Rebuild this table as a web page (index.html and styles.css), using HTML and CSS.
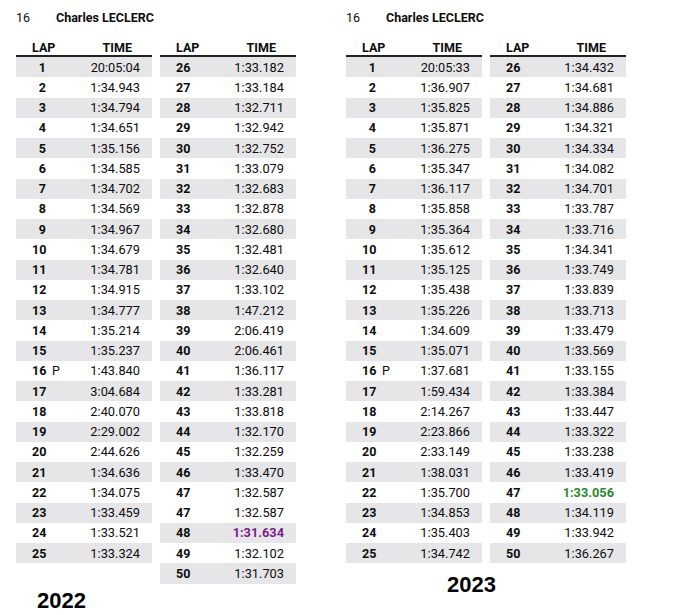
FILE: index.html
```html
<!DOCTYPE html>
<html>
<head>
<meta charset="utf-8">
<link rel="stylesheet" href="styles.css">
</head>
<body>
<div class="page">
  <section class="panel">
    <div class="driver"><span class="no">16</span><span class="name">Charles LECLERC</span></div>
    <div class="tables">
      <div class="table">
        <div class="thead"><span>LAP</span><span class="th-time">TIME</span></div>
        <div class="row g"><b>1</b><span class="t">20:05:04</span></div>
        <div class="row"><b>2</b><span class="t">1:34.943</span></div>
        <div class="row g"><b>3</b><span class="t">1:34.794</span></div>
        <div class="row"><b>4</b><span class="t">1:34.651</span></div>
        <div class="row g"><b>5</b><span class="t">1:35.156</span></div>
        <div class="row"><b>6</b><span class="t">1:34.585</span></div>
        <div class="row g"><b>7</b><span class="t">1:34.702</span></div>
        <div class="row"><b>8</b><span class="t">1:34.569</span></div>
        <div class="row g"><b>9</b><span class="t">1:34.967</span></div>
        <div class="row"><b>10</b><span class="t">1:34.679</span></div>
        <div class="row g"><b>11</b><span class="t">1:34.781</span></div>
        <div class="row"><b>12</b><span class="t">1:34.915</span></div>
        <div class="row g"><b>13</b><span class="t">1:34.777</span></div>
        <div class="row"><b>14</b><span class="t">1:35.214</span></div>
        <div class="row g"><b>15</b><span class="t">1:35.237</span></div>
        <div class="row"><b>16</b><i class="pit">P</i><span class="t">1:43.840</span></div>
        <div class="row g"><b>17</b><span class="t">3:04.684</span></div>
        <div class="row"><b>18</b><span class="t">2:40.070</span></div>
        <div class="row g"><b>19</b><span class="t">2:29.002</span></div>
        <div class="row"><b>20</b><span class="t">2:44.626</span></div>
        <div class="row g"><b>21</b><span class="t">1:34.636</span></div>
        <div class="row"><b>22</b><span class="t">1:34.075</span></div>
        <div class="row g"><b>23</b><span class="t">1:33.459</span></div>
        <div class="row"><b>24</b><span class="t">1:33.521</span></div>
        <div class="row g"><b>25</b><span class="t">1:33.324</span></div>
      </div>
      <div class="table">
        <div class="thead"><span>LAP</span><span class="th-time">TIME</span></div>
        <div class="row g"><b>26</b><span class="t">1:33.182</span></div>
        <div class="row"><b>27</b><span class="t">1:33.184</span></div>
        <div class="row g"><b>28</b><span class="t">1:32.711</span></div>
        <div class="row"><b>29</b><span class="t">1:32.942</span></div>
        <div class="row g"><b>30</b><span class="t">1:32.752</span></div>
        <div class="row"><b>31</b><span class="t">1:33.079</span></div>
        <div class="row g"><b>32</b><span class="t">1:32.683</span></div>
        <div class="row"><b>33</b><span class="t">1:32.878</span></div>
        <div class="row g"><b>34</b><span class="t">1:32.680</span></div>
        <div class="row"><b>35</b><span class="t">1:32.481</span></div>
        <div class="row g"><b>36</b><span class="t">1:32.640</span></div>
        <div class="row"><b>37</b><span class="t">1:33.102</span></div>
        <div class="row g"><b>38</b><span class="t">1:47.212</span></div>
        <div class="row"><b>39</b><span class="t">2:06.419</span></div>
        <div class="row g"><b>40</b><span class="t">2:06.461</span></div>
        <div class="row"><b>41</b><span class="t">1:36.117</span></div>
        <div class="row g"><b>42</b><span class="t">1:33.281</span></div>
        <div class="row"><b>43</b><span class="t">1:33.818</span></div>
        <div class="row g"><b>44</b><span class="t">1:32.170</span></div>
        <div class="row"><b>45</b><span class="t">1:32.259</span></div>
        <div class="row g"><b>46</b><span class="t">1:33.470</span></div>
        <div class="row"><b>47</b><span class="t">1:32.587</span></div>
        <div class="row"><b>47</b><span class="t">1:32.587</span></div>
        <div class="row g"><b>48</b><span class="t best-p">1:31.634</span></div>
        <div class="row"><b>49</b><span class="t">1:32.102</span></div>
        <div class="row g"><b>50</b><span class="t">1:31.703</span></div>
      </div>
    </div>
    <div class="year y2022">2022</div>
  </section>

  <section class="panel">
    <div class="driver"><span class="no">16</span><span class="name">Charles LECLERC</span></div>
    <div class="tables">
      <div class="table">
        <div class="thead"><span>LAP</span><span class="th-time">TIME</span></div>
        <div class="row g"><b>1</b><span class="t">20:05:33</span></div>
        <div class="row"><b>2</b><span class="t">1:36.907</span></div>
        <div class="row g"><b>3</b><span class="t">1:35.825</span></div>
        <div class="row"><b>4</b><span class="t">1:35.871</span></div>
        <div class="row g"><b>5</b><span class="t">1:36.275</span></div>
        <div class="row"><b>6</b><span class="t">1:35.347</span></div>
        <div class="row g"><b>7</b><span class="t">1:36.117</span></div>
        <div class="row"><b>8</b><span class="t">1:35.858</span></div>
        <div class="row g"><b>9</b><span class="t">1:35.364</span></div>
        <div class="row"><b>10</b><span class="t">1:35.612</span></div>
        <div class="row g"><b>11</b><span class="t">1:35.125</span></div>
        <div class="row"><b>12</b><span class="t">1:35.438</span></div>
        <div class="row g"><b>13</b><span class="t">1:35.226</span></div>
        <div class="row"><b>14</b><span class="t">1:34.609</span></div>
        <div class="row g"><b>15</b><span class="t">1:35.071</span></div>
        <div class="row"><b>16</b><i class="pit">P</i><span class="t">1:37.681</span></div>
        <div class="row g"><b>17</b><span class="t">1:59.434</span></div>
        <div class="row"><b>18</b><span class="t">2:14.267</span></div>
        <div class="row g"><b>19</b><span class="t">2:23.866</span></div>
        <div class="row"><b>20</b><span class="t">2:33.149</span></div>
        <div class="row g"><b>21</b><span class="t">1:38.031</span></div>
        <div class="row"><b>22</b><span class="t">1:35.700</span></div>
        <div class="row g"><b>23</b><span class="t">1:34.853</span></div>
        <div class="row"><b>24</b><span class="t">1:35.403</span></div>
        <div class="row g"><b>25</b><span class="t">1:34.742</span></div>
      </div>
      <div class="table">
        <div class="thead"><span>LAP</span><span class="th-time">TIME</span></div>
        <div class="row g"><b>26</b><span class="t">1:34.432</span></div>
        <div class="row"><b>27</b><span class="t">1:34.681</span></div>
        <div class="row g"><b>28</b><span class="t">1:34.886</span></div>
        <div class="row"><b>29</b><span class="t">1:34.321</span></div>
        <div class="row g"><b>30</b><span class="t">1:34.334</span></div>
        <div class="row"><b>31</b><span class="t">1:34.082</span></div>
        <div class="row g"><b>32</b><span class="t">1:34.701</span></div>
        <div class="row"><b>33</b><span class="t">1:33.787</span></div>
        <div class="row g"><b>34</b><span class="t">1:33.716</span></div>
        <div class="row"><b>35</b><span class="t">1:34.341</span></div>
        <div class="row g"><b>36</b><span class="t">1:33.749</span></div>
        <div class="row"><b>37</b><span class="t">1:33.839</span></div>
        <div class="row g"><b>38</b><span class="t">1:33.713</span></div>
        <div class="row"><b>39</b><span class="t">1:33.479</span></div>
        <div class="row g"><b>40</b><span class="t">1:33.569</span></div>
        <div class="row"><b>41</b><span class="t">1:33.155</span></div>
        <div class="row g"><b>42</b><span class="t">1:33.384</span></div>
        <div class="row"><b>43</b><span class="t">1:33.447</span></div>
        <div class="row g"><b>44</b><span class="t">1:33.322</span></div>
        <div class="row"><b>45</b><span class="t">1:33.238</span></div>
        <div class="row g"><b>46</b><span class="t">1:33.419</span></div>
        <div class="row"><b>47</b><span class="t best-g">1:33.056</span></div>
        <div class="row g"><b>48</b><span class="t">1:34.119</span></div>
        <div class="row"><b>49</b><span class="t">1:33.942</span></div>
        <div class="row g"><b>50</b><span class="t">1:36.267</span></div>
      </div>
    </div>
    <div class="year y2023">2023</div>
  </section>
</div>
</body>
</html>
```
FILE: styles.css
```css
html, body {
  margin: 0;
  padding: 0;
  background: #ffffff;
}

body {
  font-family: Roboto, "Liberation Sans", sans-serif;
  color: #0d0d0d;
}

.page {
  display: flex;
  align-items: flex-start;
  gap: 50px;
  padding-left: 16px;
}

.panel {
  display: flex;
  flex-direction: column;
  align-items: flex-start;
}

.driver {
  padding-top: 10px;
  line-height: 16px;
  font-size: 12.5px;
  display: flex;
}

.driver .no {
  width: 40px;
}

.driver .name {
  font-weight: 700;
}

.tables {
  display: flex;
  align-items: flex-start;
  gap: 8px;
}

.table {
  width: 136px;
  display: flex;
  flex-direction: column;
}

.thead {
  display: flex;
  padding: 15px 20px 0 16px;
  line-height: 14px;
  font-size: 12.5px;
  font-weight: 700;
  border-bottom: 2px solid #222222;
}

.th-time {
  margin-left: auto;
}

.row {
  display: flex;
  align-items: center;
  height: 20.25px;
  padding: 0 12px 0 16px;
}

.row.g {
  background: #e6e6e8;
}

.row b {
  width: 14px;
  text-align: right;
  font-size: 12.5px;
  font-weight: 700;
}

.pit {
  font-style: normal;
  font-size: 12.5px;
  margin-left: 6px;
}

.t {
  margin-left: auto;
  font-size: 12.8px;
}

.best-p {
  color: #7d1c8c;
  font-weight: 700;
}

.best-g {
  color: #2b8a2b;
  font-weight: 700;
}

.year {
  font-family: "Liberation Sans", Arial, sans-serif;
  font-weight: 700;
  font-size: 22px;
  line-height: 22px;
  color: #000000;
}

.y2022 {
  margin-top: 6px;
  margin-left: 21px;
}

.y2023 {
  margin-top: 11px;
  margin-left: 101px;
}
```
